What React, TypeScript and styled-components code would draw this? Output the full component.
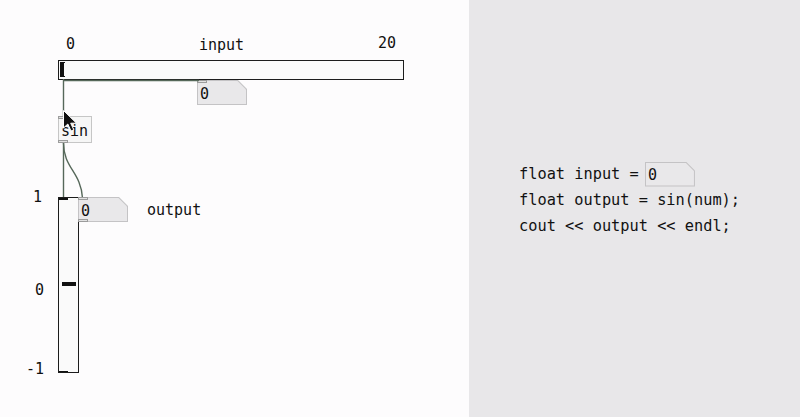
import React from 'react';
import styled, { createGlobalStyle } from 'styled-components';

const GlobalStyle = createGlobalStyle`
  html, body {
    margin: 0;
    padding: 0;
    background: #fdfcfd;
  }
  body {
    font-family: 'DejaVu Sans Mono', 'Liberation Mono', monospace;
    font-size: 15px;
    color: #111;
  }
`;

const Page = styled.div`
  display: flex;
  width: 800px;
  height: 417px;
  overflow: hidden;
`;

// the patch canvas: objects sit at their own coordinates, as in Pd
const Canvas = styled.div`
  position: relative;
  width: 469px;
  height: 100%;
  background: #fdfcfd;
`;

const CodePanel = styled.div`
  flex: 1;
  background: #e8e7e9;
  display: flex;
  flex-direction: column;
  justify-content: center;
  padding: 0 0 17px 50px;
  gap: 1px;
`;

const CodeLine = styled.div`
  display: flex;
  align-items: center;
  height: 25px;
  font-size: 15.3px;
  white-space: pre;
  color: #111;
`;

const Label = styled.span<{ x: number; y: number }>`
  position: absolute;
  left: ${(p) => p.x}px;
  top: ${(p) => p.y}px;
  line-height: 18px;
  font-size: 15px;
  white-space: pre;
`;

const HSlider = styled.div`
  position: absolute;
  left: 58px;
  top: 60px;
  width: 346px;
  height: 20px;
  box-sizing: border-box;
  border: 1.5px solid #1c1c1c;
  background: #fafafa;
`;

const HKnob = styled.div`
  position: absolute;
  left: 1px;
  top: 1px;
  width: 5px;
  height: 15px;
  box-sizing: border-box;
  border-left: 4px solid #111;
  border-top: 1.5px solid #111;
  border-bottom: 1.5px solid #111;
`;

const VSlider = styled.div`
  position: absolute;
  left: 58px;
  top: 197px;
  width: 21px;
  height: 176px;
  box-sizing: border-box;
  border: 1.5px solid #1c1c1c;
  background: #fafafa;
`;

const VKnob = styled.div<{ y: number }>`
  position: absolute;
  left: 3px;
  right: 2px;
  top: ${(p) => p.y}px;
  height: 3.5px;
  background: #111;
`;

const EdgeMark = styled.div<{ bottom?: boolean }>`
  position: absolute;
  left: 0;
  width: 9px;
  height: ${(p) => (p.bottom ? 1.5 : 2)}px;
  background: #111;
  ${(p) => (p.bottom ? 'bottom: 0;' : 'top: 0;')}
`;

const AtomOuter = styled.div<{ x?: number; y?: number; inline?: boolean }>`
  position: ${(p) => (p.inline ? 'relative' : 'absolute')};
  ${(p) => (p.inline ? 'margin-left: -3px;' : `left: ${p.x}px; top: ${p.y}px;`)}
  width: 50px;
  height: 25px;
  padding: 1px;
  box-sizing: border-box;
  background: #c4c3c5;
  clip-path: polygon(0 0, calc(100% - 9px) 0, 100% 9px, 100% 100%, 0 100%);
`;

const AtomInner = styled.div`
  width: 100%;
  height: 100%;
  background: #e9e8ea;
  clip-path: polygon(0 0, calc(100% - 8.5px) 0, 100% 8.5px, 100% 100%, 0 100%);
  display: flex;
  align-items: center;
  padding-left: 2px;
  padding-top: 2px;
  box-sizing: border-box;
  font-size: 15px;
`;

const Port = styled.div<{ bottom?: boolean }>`
  position: absolute;
  left: 0;
  width: 10px;
  height: 3px;
  box-sizing: border-box;
  border: 1px solid #9c9c9c;
  background: #e2e2e2;
  ${(p) => (p.bottom ? 'bottom: 0;' : 'top: 0;')}
`;

const ObjBox = styled.div`
  position: absolute;
  left: 58px;
  top: 116px;
  width: 34px;
  height: 27px;
  box-sizing: border-box;
  border: 1px solid #c6c6c6;
  background: #f6f6f6;
  padding: 5px 0 0 2px;
  font-size: 15px;
  line-height: 18px;

  ${Port} {
    left: -1px;
  }
  ${Port}:first-child {
    top: -1px;
  }
  ${Port}:last-child {
    bottom: -1px;
  }
`;

const Wires = styled.svg`
  position: absolute;
  left: 0;
  top: 0;
  pointer-events: none;
`;

const Cursor = styled.svg`
  position: absolute;
  left: 62px;
  top: 109px;
`;

interface AtomProps {
  x?: number;
  y?: number;
  value: string;
  inline?: boolean;
  inlet?: boolean;
  outlet?: boolean;
}

const Atom = ({ x, y, value, inline, inlet, outlet }: AtomProps) => (
  <AtomOuter x={x} y={y} inline={inline}>
    <AtomInner>{value}</AtomInner>
    {inlet && <Port />}
    {outlet && <Port bottom />}
  </AtomOuter>
);

export default function App() {
  return (
    <>
      <GlobalStyle />
      <Page>
        <Canvas>
          <Label x={66} y={35}>0</Label>
          <Label x={199} y={36}>input</Label>
          <Label x={378} y={34}>20</Label>

          <HSlider>
            <HKnob />
          </HSlider>

          <Atom x={197} y={80} value="0" inlet />

          <Wires width={469} height={417}>
            <g stroke="#56685a" strokeWidth={1.4} fill="none">
              <line x1={63.5} y1={79} x2={63.5} y2={116} />
              <line x1={63} y1={80.5} x2={199} y2={80.5} />
              <line x1={63.5} y1={143} x2={63.5} y2={198} />
              <path d="M63.5 143 C63.5 168 81 172 82.5 198" />
            </g>
          </Wires>

          <ObjBox>
            <Port />
            sin
            <Port bottom />
          </ObjBox>

          <Label x={33} y={188}>1</Label>
          <Label x={35} y={281}>0</Label>
          <Label x={26} y={360}>-1</Label>

          <VSlider>
            <EdgeMark />
            <VKnob y={84} />
            <EdgeMark bottom />
          </VSlider>

          <Atom x={78} y={197} value="0" inlet outlet />

          <Label x={147} y={201}>output</Label>

          <Cursor width={16} height={24} viewBox="0 0 16 24">
            <path
              d="M1.5 1.5 L1.5 19 L5.8 15 L9 22 L11.8 20.8 L8.7 14.2 L14.5 14.2 Z"
              fill="#111"
              stroke="#fff"
              strokeWidth={1}
              strokeLinejoin="round"
            />
          </Cursor>
        </Canvas>

        <CodePanel>
          <CodeLine>
            {'float input = '}
            <Atom inline value="0" />
          </CodeLine>
          <CodeLine>float output = sin(num);</CodeLine>
          <CodeLine>cout &lt;&lt; output &lt;&lt; endl;</CodeLine>
        </CodePanel>
      </Page>
    </>
  );
}
